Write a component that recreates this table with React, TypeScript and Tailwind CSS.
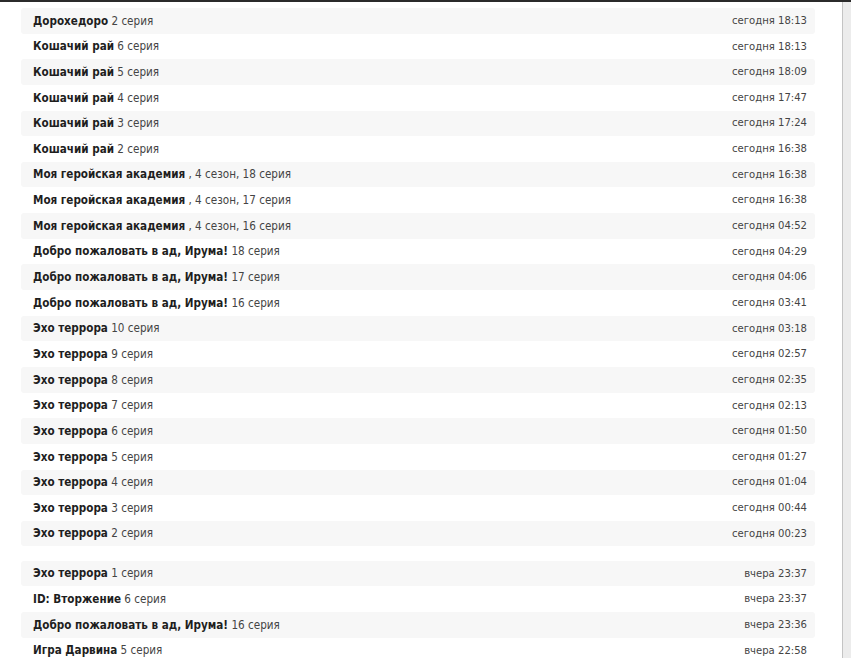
const rows: [string, string, string][] = [
	['Дорохедоро', '2 серия', 'сегодня 18:13'],
	['Кошачий рай', '6 серия', 'сегодня 18:13'],
	['Кошачий рай', '5 серия', 'сегодня 18:09'],
	['Кошачий рай', '4 серия', 'сегодня 17:47'],
	['Кошачий рай', '3 серия', 'сегодня 17:24'],
	['Кошачий рай', '2 серия', 'сегодня 16:38'],
	['Моя геройская академия', ', 4 сезон, 18 серия', 'сегодня 16:38'],
	['Моя геройская академия', ', 4 сезон, 17 серия', 'сегодня 16:38'],
	['Моя геройская академия', ', 4 сезон, 16 серия', 'сегодня 04:52'],
	['Добро пожаловать в ад, Ирума!', '18 серия', 'сегодня 04:29'],
	['Добро пожаловать в ад, Ирума!', '17 серия', 'сегодня 04:06'],
	['Добро пожаловать в ад, Ирума!', '16 серия', 'сегодня 03:41'],
	['Эхо террора', '10 серия', 'сегодня 03:18'],
	['Эхо террора', '9 серия', 'сегодня 02:57'],
	['Эхо террора', '8 серия', 'сегодня 02:35'],
	['Эхо террора', '7 серия', 'сегодня 02:13'],
	['Эхо террора', '6 серия', 'сегодня 01:50'],
	['Эхо террора', '5 серия', 'сегодня 01:27'],
	['Эхо террора', '4 серия', 'сегодня 01:04'],
	['Эхо террора', '3 серия', 'сегодня 00:44'],
	['Эхо террора', '2 серия', 'сегодня 00:23'],
];

const yesterday: [string, string, string][] = [
	['Эхо террора', '1 серия', 'вчера 23:37'],
	['ID: Вторжение', '6 серия', 'вчера 23:37'],
	['Добро пожаловать в ад, Ирума!', '16 серия', 'вчера 23:36'],
	['Игра Дарвина', '5 серия', 'вчера 22:58'],
];

function Row({ item, odd }: { item: [string, string, string]; odd: boolean }) {
	return (
		<div
			className={`flex items-center justify-between h-[25.65px] pt-px pl-3 pr-2 rounded-[3px] ${odd ? 'bg-[#f7f7f7]' : ''}`}
		>
			<div className="text-[#444]">
				<b className="font-bold text-[#1e1e1e]">{item[0]}</b> {item[1]}
			</div>
			<div className="text-[#444] text-[11.2px]">{item[2]}</div>
		</div>
	);
}

export default function App() {
	return (
		<div className="w-[851px] h-[658px] overflow-hidden bg-[#ececec] border-t-2 border-[#2b2b2b] flex text-[11.6px] [font-family:'DejaVu_Sans_Condensed','DejaVu_Sans',sans-serif]">
			<div className="w-[843px] h-full bg-white border-r border-[#c4c4c4] pt-[6px] pl-[21px] pr-[27px]">
				{rows.map((r, i) => (
					<Row key={'t' + i} item={r} odd={i % 2 === 0} />
				))}
				<div className="h-[14.4px]"></div>
				{yesterday.map((r, i) => (
					<Row key={'y' + i} item={r} odd={i % 2 === 0} />
				))}
			</div>
		</div>
	);
}
